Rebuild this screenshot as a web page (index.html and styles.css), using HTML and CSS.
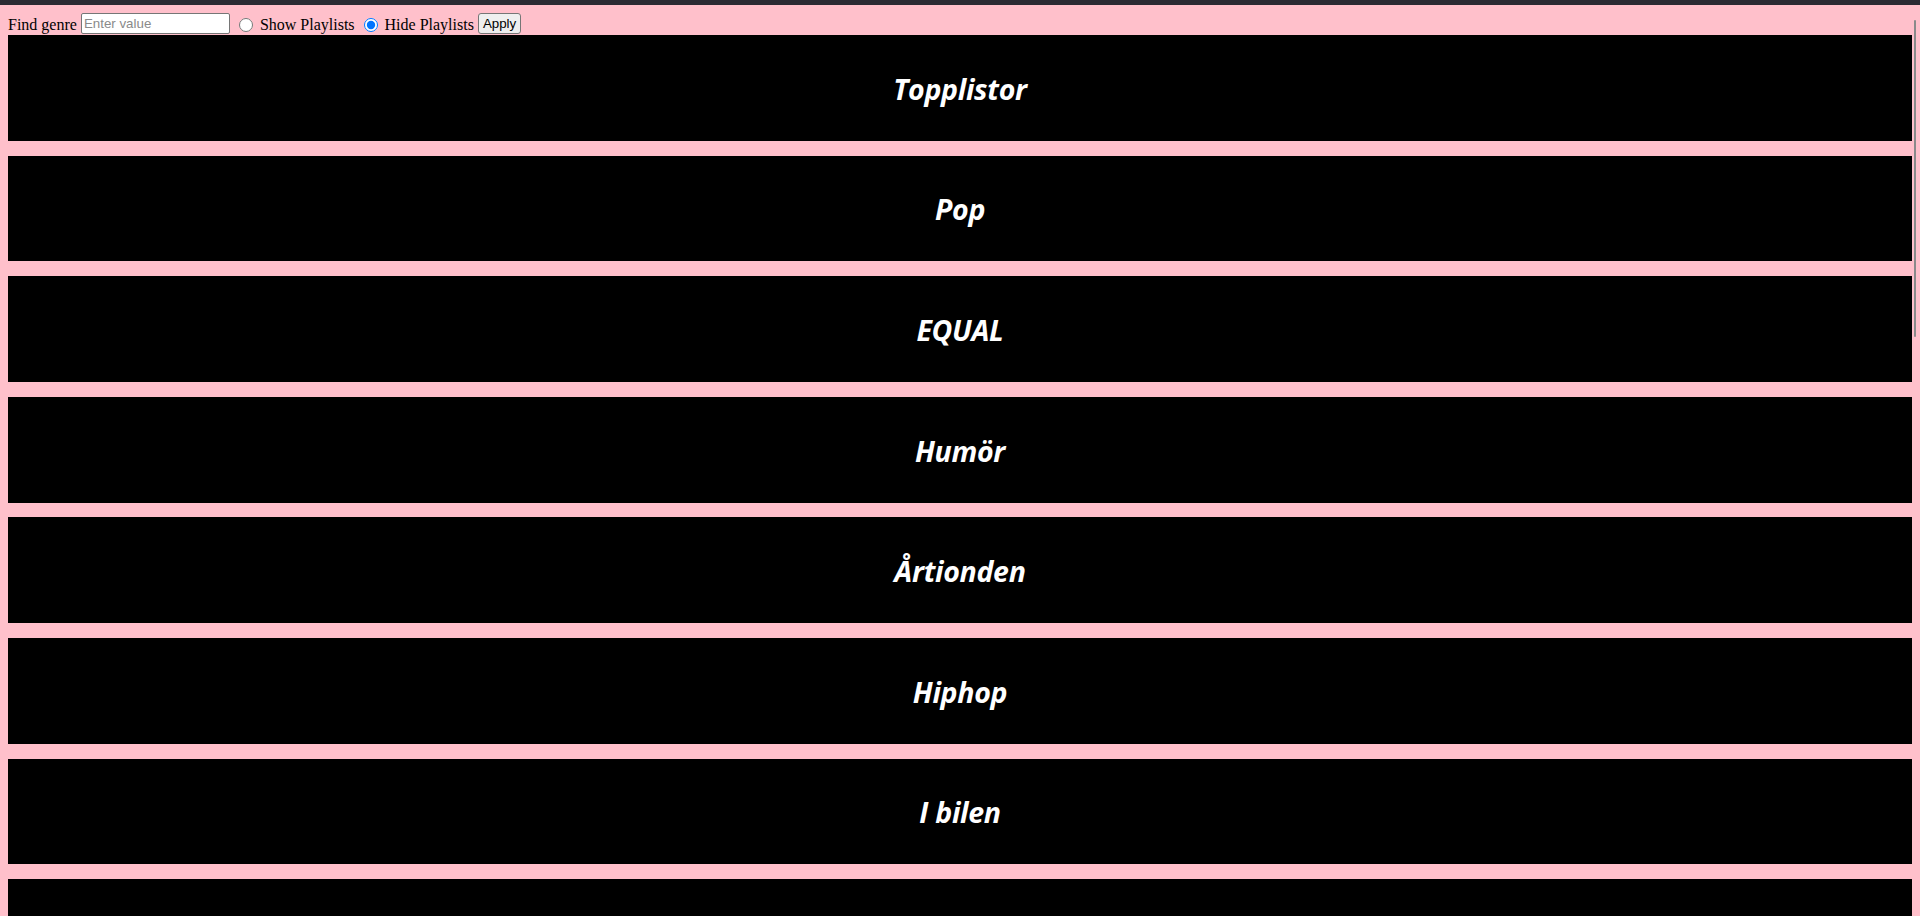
FILE: index.html
```html
<!DOCTYPE html>
<html>
<head>
<meta charset="utf-8">
<link rel="stylesheet" href="styles.css">
</head>
<body>
<div class="topbar"></div>
<div class="page">
  <form class="controls">
    Find genre <input class="genre-input" type="text" placeholder="Enter value">
    <input type="radio" name="pl" id="show"> <label for="show">Show Playlists</label>
    <input type="radio" name="pl" id="hide" checked> <label for="hide">Hide Playlists</label>
    <button type="button" class="apply">Apply</button>
  </form>
  <div class="genres">
    <div class="genre"><h2>Topplistor</h2></div>
    <div class="genre"><h2>Pop</h2></div>
    <div class="genre"><h2>EQUAL</h2></div>
    <div class="genre"><h2>Humör</h2></div>
    <div class="genre"><h2>Årtionden</h2></div>
    <div class="genre"><h2>Hiphop</h2></div>
    <div class="genre"><h2>I bilen</h2></div>
    <div class="genre"><h2>Rock</h2></div>
  </div>
</div>
<div class="scroll-thumb"></div>
</body>
</html>
```
FILE: styles.css
```css
html {
  scrollbar-width: none;
}
html::-webkit-scrollbar {
  display: none;
}
body {
  margin: 0;
  height: 916px;
  overflow: hidden;
  background: #ffc0cb;
  font-family: "Liberation Serif", "Times New Roman", serif;
  font-size: 16px;
}
.topbar {
  height: 5px;
  background: #2b2a33;
}
.page {
  padding: 8px 8px 0 8px;
}
.controls {
  margin: 0;
  height: 22px;
  line-height: 23px;
  white-space: nowrap;
}
.genre-input {
  width: 149px;
  height: 21px;
  box-sizing: border-box;
  font-family: "Liberation Sans", Arial, sans-serif;
  font-size: 13.33px;
  padding: 1px 2px;
  border: 1px solid #767676;
  border-radius: 2px;
  vertical-align: top;
  margin: 0;
}
.genre-input::placeholder {
  color: #8a8a8a;
}
.controls input[type="radio"] {
  width: 14px;
  height: 14px;
  margin: 5px 3px 0 5px;
  vertical-align: top;
}
.apply {
  font-family: "Liberation Sans", Arial, sans-serif;
  font-size: 13.33px;
  height: 21px;
  line-height: 15px;
  padding: 1px 4px;
  border: 1px solid #767676;
  border-radius: 3px;
  background: #efefef;
  color: #000;
  vertical-align: top;
  margin: 0;
}
.genres {
  display: flex;
  flex-direction: column;
  gap: 14.8px;
}
.genre {
  height: 105.8px;
  background: #000;
  display: flex;
  align-items: center;
  justify-content: center;
  flex-shrink: 0;
}
.genre h2 {
  margin: 0;
  padding-top: 2px;
  color: #fff;
  font-family: "Open Sans", "Noto Sans", sans-serif;
  font-style: italic;
  font-weight: 700;
  font-size: 28.5px;
  letter-spacing: -0.3px;
}
.scroll-thumb {
  position: fixed;
  left: 1914px;
  top: 20px;
  width: 2px;
  height: 317px;
  background: #8a8a8a;
  border-radius: 1px;
}
```
